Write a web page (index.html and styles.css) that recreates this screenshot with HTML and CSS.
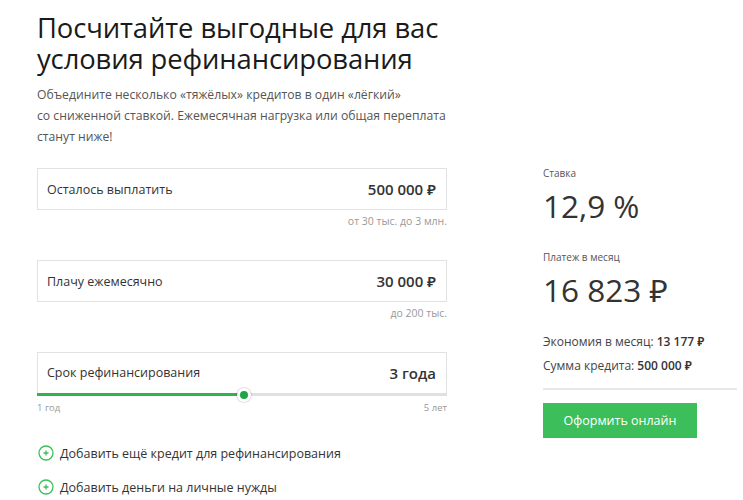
FILE: index.html
```html
<!DOCTYPE html>
<html lang="ru">
<head>
<meta charset="utf-8">
<link rel="stylesheet" href="styles.css">
</head>
<body>
<div class="page">
  <header class="intro">
    <h1 class="title"><span class="tline">Посчитайте выгодные для вас</span><span class="tline">условия рефинансирования</span></h1>
    <p class="lead">Объедините несколько «тяжёлых» кредитов в один «лёгкий»<br>со сниженной ставкой. Ежемесячная нагрузка или общая переплата<br>станут ниже!</p>
  </header>
  <div class="calc">
    <div class="form">
      <div class="field">
        <div class="box">
          <span class="label">Осталось выплатить</span>
          <span class="value">500 000 ₽</span>
        </div>
        <div class="hint">от 30 тыс. до 3 млн.</div>
      </div>
      <div class="field">
        <div class="box">
          <span class="label">Плачу ежемесячно</span>
          <span class="value">30 000 ₽</span>
        </div>
        <div class="hint">до 200 тыс.</div>
      </div>
      <div class="field">
        <div class="box box-slider">
          <span class="label">Срок рефинансирования</span>
          <span class="value">3 года</span>
          <div class="track"><div class="fill" style="width: 50.5%"></div><div class="knob" style="left: 50.5%"></div></div>
        </div>
        <div class="range"><span>1 год</span><span>5 лет</span></div>
      </div>
      <ul class="adds">
        <li class="add"><span class="plus"><svg width="16" height="16" viewBox="0 0 16 16"><circle cx="8" cy="8" r="7" fill="none" stroke="#3dbe5b" stroke-width="1.3"/><path d="M8 5.5v5M5.5 8h5" stroke="#3dbe5b" stroke-width="1.3"/></svg></span>Добавить ещё кредит для рефинансирования</li>
        <li class="add"><span class="plus"><svg width="16" height="16" viewBox="0 0 16 16"><circle cx="8" cy="8" r="7" fill="none" stroke="#3dbe5b" stroke-width="1.3"/><path d="M8 5.5v5M5.5 8h5" stroke="#3dbe5b" stroke-width="1.3"/></svg></span>Добавить деньги на личные нужды</li>
      </ul>
    </div>
    <aside class="result">
      <div class="r-label">Ставка</div>
      <div class="r-big">12,9 %</div>
      <div class="r-label r-label2">Платеж в месяц</div>
      <div class="r-big">16 823 ₽</div>
      <div class="r-line r-line1">Экономия в месяц: <b>13 177 ₽</b></div>
      <div class="r-line">Сумма кредита: <b>500 000 ₽</b></div>
      <hr class="divider">
      <button class="btn">Оформить онлайн</button>
    </aside>
  </div>
</div>
</body>
</html>
```
FILE: styles.css
```css
* { box-sizing: border-box; }
body {
  margin: 0;
  background: #fff;
  font-family: "Open Sans", "Noto Sans", sans-serif;
  color: #333;
}
.page {
  padding: 12px 0 0 37px;
  width: 743px;
}
.intro { width: 440px; }
.title {
  margin: 0;
  font-size: 27.4px;
  line-height: 31px;
  font-weight: 400;
  color: #1a1a1a;
  letter-spacing: -0.1px;
}
.tline { display: block; height: 31px; }
.lead {
  margin: 10px 0 0;
  font-size: 12.2px;
  line-height: 21px;
  color: #555;
}
.calc {
  display: grid;
  grid-template-columns: 410px 194px;
  column-gap: 96px;
  margin-top: 21px;
}
.field { margin-bottom: 32px; }
.field:last-of-type { margin-bottom: 0; }
.box {
  position: relative;
  height: 42px;
  border: 1px solid #e2e2e2;
  display: flex;
  align-items: center;
  justify-content: space-between;
  padding: 0 10px 0 9px;
}
.label { font-size: 12.5px; color: #333; }
.value { font-size: 15px; font-weight: 600; color: #333; }
.hint {
  text-align: right;
  font-size: 10.5px;
  color: #999;
  margin-top: 4px;
  line-height: 14px;
}
.box-slider { border-bottom: none; padding-bottom: 2px; }
.track {
  position: absolute;
  left: -1px; right: -1px; bottom: -2px;
  height: 3px;
  background: #e0e0e0;
}
.fill { height: 3px; background: #31b34f; }
.knob {
  position: absolute;
  top: 50%;
  width: 14px; height: 14px;
  margin: -7px 0 0 -7px;
  border-radius: 50%;
  background: #1fa644;
  border: 3px solid #fff;
  box-shadow: 0 0 2px rgba(0,0,0,0.35);
}
.range {
  display: flex;
  justify-content: space-between;
  font-size: 9.5px;
  color: #999;
  margin-top: 7px;
  line-height: 14px;
}
.adds { list-style: none; margin: 28px 0 0; padding: 0; }
.add {
  display: flex;
  align-items: center;
  font-size: 12.5px;
  color: #333;
  height: 20px;
  margin-bottom: 14px;
}
.plus { display: flex; margin-right: 6px; margin-left: 1px; }
.result { margin-top: -2px; }
.r-label { font-size: 10px; color: #555; line-height: 14px; }
.r-label2 { margin-top: 24px; }
.r-big {
  font-size: 31.5px;
  line-height: 40px;
  color: #333;
  margin-top: 6px;
}
.r-line { font-size: 12px; line-height: 24px; color: #444; }
.r-line1 { margin-top: 20px; }
.r-line b { font-weight: 600; color: #333; }
.divider {
  border: 0;
  border-top: 2px solid #e8e8e8;
  margin: 10px 0 13px;
}
.btn {
  width: 154px;
  height: 35px;
  border: 0;
  background: #3cbf5a;
  color: #fff;
  font-family: inherit;
  font-size: 12.5px;
}
```
